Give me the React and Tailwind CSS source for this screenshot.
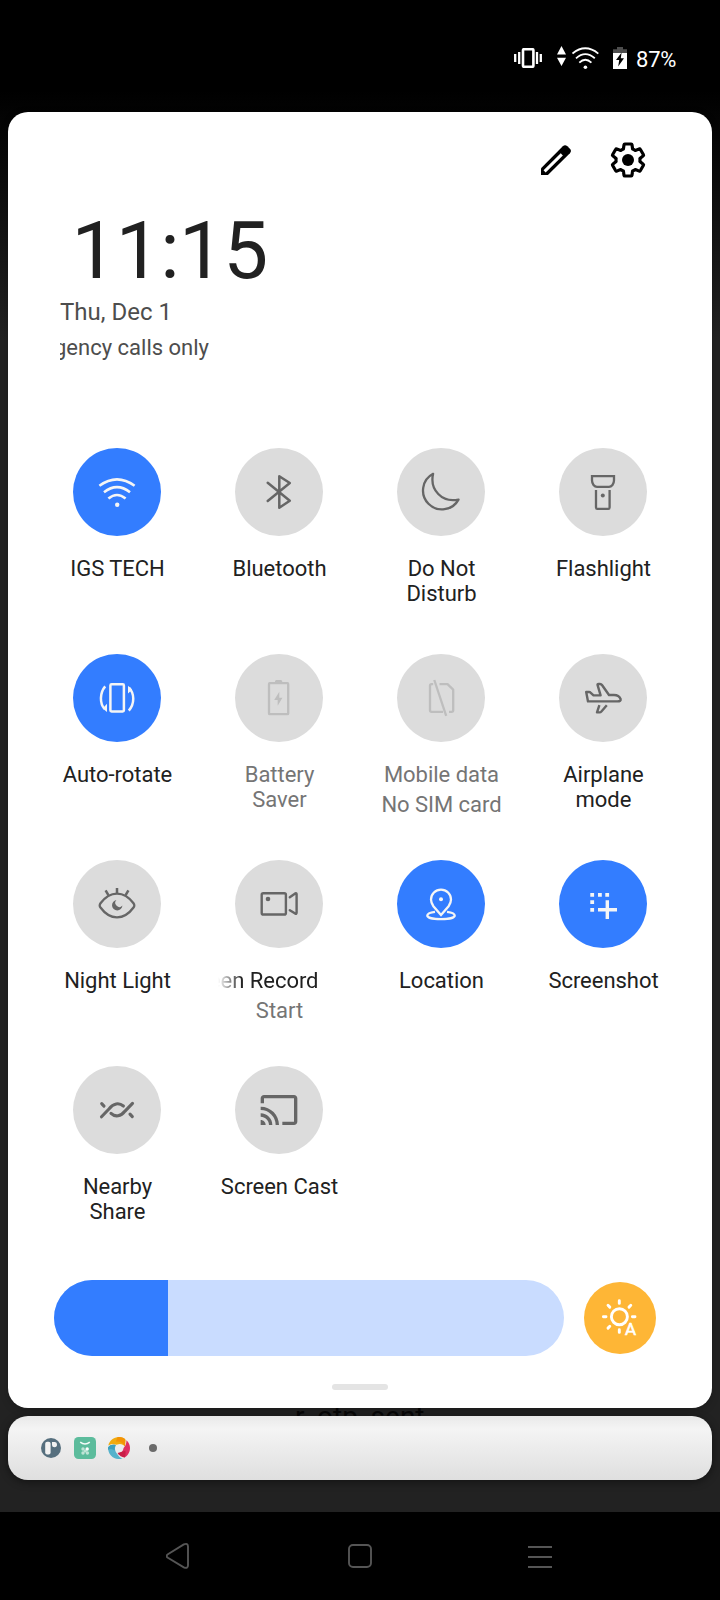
import React from 'react';
import { MdCast } from 'react-icons/md';

const Glyph = ({ children, w = 2.4 }) => (
  <svg
    viewBox="-24 -24 48 48"
    className="h-12 w-12"
    fill="none"
    stroke="currentColor"
    strokeWidth={w}
    strokeLinecap="round"
    strokeLinejoin="round"
  >
    {children}
  </svg>
);

const Dot = ({ x, y, r }) => <circle cx={x} cy={y} r={r} fill="currentColor" stroke="none" />;

const icons = {
  wifi: (
    <Glyph w={2.6}>
      <g strokeLinecap="butt">
        <path d="M-17.6-6.2Q0-19 17.6-6.2" />
        <path d="M-13 .2Q0-10 13 .2" />
        <path d="M-8.6 6.6Q0-.6 8.6 6.6" />
      </g>
      <Dot x={0.2} y={12.7} r={2.2} />
    </Glyph>
  ),
  bluetooth: (
    <Glyph w={2.5}>
      <path d="M-11.3-9.2L10.8 8.7L.3 15.7V-15.7L10.8-9L-11.3 9" />
    </Glyph>
  ),
  moon: (
    <Glyph w={2.3}>
      <path d="M-7.4-18.2A18.9 18.9 0 1 0 18 7.6C1.5 11-11-2-7.4-18.2Z" transform="translate(-.5 0)" />
    </Glyph>
  ),
  flashlight: (
    <Glyph w={2.3}>
      <path d="M-11-15.8H11V-11.8C11-8 8.6-5.2 6-5.2H-6C-8.6-5.2-11-8-11-11.8Z" strokeLinejoin="miter" />
      <path d="M-7-2V15.6Q-7 16.8-5.8 16.8H5.4Q6.6 16.8 6.6 15.6V-2" strokeLinecap="butt" />
      <Dot x={-0.2} y={3.4} r={2} />
    </Glyph>
  ),
  rotate: (
    <Glyph w={2.5}>
      <rect x="-6.6" y="-13.7" width="13.5" height="27.2" rx="1.2" />
      <path d="M-11.8-11.6C-17.4-5-17.4 5.5-12.4 11" strokeLinecap="butt" />
      <path d="M12-10.5C17.6-4.5 17.8 6 11.8 12.6" strokeLinecap="butt" />
      <path d="M-10 5.8V14L-14.3 10.5Z M11-12.2V-4.5L15-8.2Z" fill="currentColor" stroke="none" />
    </Glyph>
  ),
  battery: (
    <Glyph w={2.3}>
      <rect x="-10" y="-14.8" width="19.2" height="31" rx=".8" />
      <path d="M-4-15V-17L-3-18H2.2L3.2-17V-15Z" fill="currentColor" stroke="none" />
      <path d="M.3-6.3L-4.8 2H-1.3V7.8L3.4-.3H.3Z" fill="currentColor" stroke="none" />
    </Glyph>
  ),
  sim: (
    <Glyph w={2.3}>
      <g strokeLinecap="butt">
        <path d="M-6.7-18L5.2 17.8" />
        <path d="M-7.8-13.8H-9.4Q-11-13.8-11-12.2V12.2Q-11 13.8-9.4 13.8H2" />
        <path d="M-1.5-13.8H6.5L12.2-8.4V12.2Q12.2 13.8 10.6 13.8H8" />
      </g>
    </Glyph>
  ),
  airplane: (
    <Glyph w={2.4}>
      <path d="M-16.8-6L-15 3.4H14.5Q18.2 3.4 17.6 1Q16-3 11-3H6L-1-13Q-1.7-14-3-14H-4.5Q-5.8-14-5.4-12.8L-2.4-2.6H-9.5L-12.5-5.4Q-13-6-14-6Z" />
      <path d="M-3.6 7.2L-6 14.4H-3.4Q-2.4 14.4-1.6 13.5L3.8 7.2" strokeLinecap="butt" />
    </Glyph>
  ),
  eye: (
    <Glyph w={2.3}>
      <path d="M-17.3 1.4Q-17.3.4-16.5-.7C-7-13.6 7-13.6 16.5-.7Q17.3.4 17.3 1.4Q17.3 2.4 16.5 3.5C7 16.6-7 16.6-16.5 3.5Q-17.3 2.4-17.3 1.4Z" />
      <g strokeLinecap="butt" strokeWidth="2.5">
        <path d="M0-16V-10.5M-11.4-13.6L-8.6-8.8M11.4-13.6L8.6-8.8" />
      </g>
      <path d="M-.6-3.9A5.2 5.2 0 1 0 5.4 1.6A3.9 3.9 0 0 1-.6-3.9Z" fill="currentColor" stroke="none" />
    </Glyph>
  ),
  camera: (
    <Glyph w={2.4}>
      <rect x="-17.3" y="-10.8" width="24.2" height="21.3" rx="1.6" />
      <Dot x={-11} y={-5} r={2.3} />
      <path d="M10.8-6.8L16.2-10.6Q17.6-11 17.6-9.8V8.6Q17.6 10.2 16.2 9.6L10.8 6.2" />
    </Glyph>
  ),
  location: (
    <Glyph w={2.3}>
      <path d="M0 11L-7.6 2.2Q-10-1-10-4.4A10 10 0 0 1 10-4.4Q10-1 7.6 2.2Z" strokeLinejoin="miter" />
      <Dot x={0} y={-4.7} r={2} />
      <path
        d="M-6 7.8C-10.8 8.4-13.7 9.8-13.7 11.5C-13.7 13.7-7.6 15.2 0 15.2S13.7 13.7 13.7 11.5C13.7 9.8 10.8 8.4 6 7.8"
        strokeLinecap="butt"
      />
    </Glyph>
  ),
  screenshot: (
    <Glyph>
      <path
        d="M-12.7-11h3.8v3.8h-3.8ZM-5-11h3.8v3.8H-5ZM2.3-11h3.8v3.8H2.3ZM-12.7-3.7h3.8V.1h-3.8ZM-12.7 4h3.8v3.7h-3.8ZM-5 4.1H2.6V-3.8H6V4.1H14V7.5H6V15H2.6V7.5H-5Z"
        fill="currentColor"
        stroke="none"
      />
    </Glyph>
  ),
  nearby: (
    <Glyph w={3.1}>
      <path d="M-15.5 6.8L-7.8-1.2C-3.6-6.8 2-7.6 6.4-4" />
      <path d="M-6 3.4C-1.6 7.6 4 6.2 7.8 1.3L15.5-6.6" />
      <path d="M-15.3-6.4L-13-3.9M13 4.1L15.3 6.6" />
    </Glyph>
  ),
  cast: <MdCast className="h-[40px] w-[40px]" />,
};

const tiles = [
  { icon: 'wifi', lines: ['IGS TECH'], on: true },
  { icon: 'bluetooth', lines: ['Bluetooth'] },
  { icon: 'moon', lines: ['Do Not', 'Disturb'] },
  { icon: 'flashlight', lines: ['Flashlight'] },
  { icon: 'rotate', lines: ['Auto-rotate'], on: true },
  { icon: 'battery', lines: ['Battery', 'Saver'], disabled: true },
  { icon: 'sim', lines: ['Mobile data'], sub: 'No SIM card', disabled: true },
  { icon: 'airplane', lines: ['Airplane', 'mode'] },
  { icon: 'eye', lines: ['Night Light'] },
  { icon: 'camera', lines: ['Screen Record'], sub: 'Start', marquee: true },
  { icon: 'location', lines: ['Location'], on: true },
  { icon: 'screenshot', lines: ['Screenshot'], on: true },
  { icon: 'nearby', lines: ['Nearby', 'Share'] },
  { icon: 'cast', lines: ['Screen Cast'] },
];

function Tile({ icon, lines, sub, on, disabled, marquee }) {
  const circle = on
    ? 'bg-[#337dff] text-[#f5f5f5]'
    : disabled
      ? 'bg-[#dcdcdc] text-[#bebebe]'
      : 'bg-[#dcdcdc] text-[#666666]';
  return (
    <div className="flex flex-col items-center">
      <div className={`flex h-[88px] w-[88px] items-center justify-center rounded-full ${circle}`}>{icons[icon]}</div>
      <div
        className={`mt-5 whitespace-nowrap pl-px text-center text-[22px] leading-[25px] tracking-[-0.03px] ${disabled ? 'text-[#757575]' : 'text-[#212121]'}`}
      >
        {marquee ? (
          <div className="flex w-[124px] justify-end overflow-hidden pr-[23px] [mask-image:linear-gradient(to_right,transparent,black_24px)]">
            {lines[0]}
          </div>
        ) : (
          lines.map((l) => <div key={l}>{l}</div>)
        )}
        {sub && <div className="mt-[5px] text-[#757575]">{sub}</div>}
      </div>
    </div>
  );
}

function StatusBar() {
  return (
    <div className="flex h-[112px] items-start pl-[514px] pt-[46px] text-white">
      <svg className="mt-[2px] h-5 w-7" viewBox="0 0 28 20" fill="none" stroke="currentColor">
        <rect x="9" y="1.2" width="10.4" height="17.6" rx="1" strokeWidth="2.6" />
        <path d="M5.2 4V16M23 4V16M1.2 6V14M26.8 6V14" strokeWidth="2.3" />
      </svg>
      <svg className="ml-[15px] h-5 w-[9px]" viewBox="0 0 9 20" fill="currentColor">
        <path d="M4.5 0L9 8.4H0ZM4.5 20L0 11.8H9Z" />
      </svg>
      <svg className="ml-[6px] mt-px h-[23px] w-[27px]" viewBox="0 0 27 23" fill="none" stroke="currentColor" strokeWidth="1.8">
        <path d="M.5 6.6Q13.3-4 26.3 6.6M4 11.3Q13.3 3 22.8 11.3M7.3 15.6Q13.3 10 19.4 15.6" />
        <circle cx="13.4" cy="20.2" r="1.8" fill="currentColor" stroke="none" />
      </svg>
      <svg className="ml-[14px] mt-px h-[22px] w-[14px]" viewBox="0 0 14 22">
        <path d="M4 0H10V2.3H14V6H0V2.3H4Z" fill="#4d4d4d" />
        <path d="M0 6H14V22H0Z" fill="#fff" />
        <path d="M8.6 5.6L3 13H6.2L5.2 19.5L11 11.2H7.8Z" fill="#000" />
      </svg>
      <div className="ml-[9px] mt-px text-[22px] leading-[25px] tracking-[-0.2px]">87%</div>
    </div>
  );
}

function Header() {
  return (
    <div>
      <div className="flex h-[96px] items-start pl-[533px] pt-[31px] text-black">
        <svg className="mt-[2px] h-[30px] w-[30px]" viewBox="0 0 30 30">
          <path d="M0 23.3V30H6.9L28.9 8.2Q31 6 28.9 3.8L26.4 1.2Q24-.8 21.8 1.2Z" fill="#000" />
          <path d="M3.6 26.4L20.8 9.4" stroke="#fff" strokeWidth="3" />
        </svg>
        <svg className="-mt-[3px] ml-[37px] h-[40px] w-[40px]" viewBox="0 0 24 24" fill="none">
          <path
            d="M19.14 12.94c.04-.3.06-.61.06-.94 0-.32-.02-.64-.07-.94l2.03-1.58c.18-.14.23-.41.12-.61l-1.92-3.32c-.12-.22-.37-.29-.59-.22l-2.39.96c-.5-.38-1.03-.7-1.62-.94l-.36-2.54c-.04-.24-.24-.41-.48-.41h-3.84c-.24 0-.43.17-.47.41l-.36 2.54c-.59.24-1.13.57-1.62.94l-2.39-.96c-.22-.08-.47 0-.59.22L2.74 8.87c-.12.21-.08.47.12.61l2.03 1.58c-.05.3-.09.63-.09.94s.02.64.07.94l-2.03 1.58c-.18.14-.23.41-.12.61l1.92 3.32c.12.22.37.29.59.22l2.39-.96c.5.38 1.03.7 1.62.94l.36 2.54c.05.24.24.41.48.41h3.84c.24 0 .44-.17.47-.41l.36-2.54c.59-.24 1.13-.56 1.62-.94l2.39.96c.22.08.47 0 .59-.22l1.92-3.32c.12-.22.07-.47-.12-.61l-2.01-1.58z"
            stroke="#000"
            strokeWidth="1.9"
            strokeLinejoin="round"
          />
          <circle cx="12" cy="12" r="3.6" fill="#000" />
        </svg>
      </div>
      <div className="pl-[63.5px] text-[80px] leading-[86px] tracking-[-0.6px] text-[#212121]">11:15</div>
      <div className="ml-[52px] mt-1 text-[24px] leading-[28px] text-[#4d4d4d]">Thu, Dec 1</div>
      <div className="ml-[52px] mt-[9px] flex w-[149px] justify-end overflow-hidden whitespace-nowrap text-[22px] leading-[25px] text-[#4d4d4d]">
        Emergency calls only
      </div>
    </div>
  );
}

function Brightness() {
  return (
    <div className="flex items-center pl-[46px]">
      <div className="h-[76px] w-[510px] overflow-hidden rounded-full bg-[#c9dcff]">
        <div className="h-full w-[114px] bg-[#337dff]" />
      </div>
      <div className="ml-5 flex h-[72px] w-[72px] items-center justify-center rounded-full bg-[#feb636]">
        <svg className="h-12 w-12" viewBox="-24 -24 48 48" fill="none" stroke="#fff" strokeWidth="2.9" strokeLinecap="round">
          <circle cx="-.6" cy="-1.3" r="8" />
          <path d="M-.7-17.2V-14.6M-.7 11.8V14.4M-16.6-1.3H-14M12.4-1.3H15M-12-12.7L-10.2-10.9M10.8-12.7L9-10.9M-12 10.1L-10.2 8.3" />
          <text x="5" y="16.6" fill="#fff" stroke="#fff" strokeWidth=".6" className="font-['Roboto'] text-[17px] font-normal">
            A
          </text>
        </svg>
      </div>
    </div>
  );
}

function NotificationStrip() {
  return (
    <div className="relative mx-2 mt-2 flex h-16 items-center rounded-[20px] bg-linear-to-b from-[#e9e9e9] via-[#f4f4f4] via-20% to-[#dfdfdf] pl-[33px] shadow-[0_2px_8px_rgba(0,0,0,0.45)]">
      <svg className="h-5 w-5" viewBox="0 0 20 20">
        <circle cx="10" cy="10" r="10" fill="#566f7e" />
        <rect x="4.2" y="3.8" width="5.4" height="12.8" rx="2" fill="#f2f2f2" />
        <path d="M11 4H14Q16 4.4 16 6.6Q16 9.2 13.6 9.2Q11 9.2 11 7Z" fill="#f2f2f2" />
      </svg>
      <svg className="ml-[13px] h-[22px] w-[22px]" viewBox="0 0 22 22">
        <rect width="22" height="22" rx="4.5" fill="#5cbc9c" />
        <path d="M6.2 5.2Q11 9 15.8 5.2" fill="none" stroke="#f4fbf8" strokeWidth="1.5" />
        <g fill="#bfe4d6">
          <circle cx="9" cy="12" r="1.7" />
          <circle cx="9" cy="16" r="1.7" />
          <circle cx="13.4" cy="16" r="1.7" />
          <circle cx="11.2" cy="14" r="1.6" />
        </g>
        <circle cx="13.2" cy="12" r="1.7" fill="#fff" />
      </svg>
      <svg className="ml-3 h-[22px] w-[22px]" viewBox="0 0 22 22">
        <path d="M.3 8.6C1.4 3.6 5.5 0 11 0C14 0 16.5 1 17.4 2.8L17 9.6C15 7 12 6.4 8.6 7.8C5 6.8 2.5 7.2.3 8.6Z" fill="#f0ab10" />
        <path d="M9.4 .2C12.5-.4 16 .6 17.4 2.8L17 9.6C15 5.6 12 4.2 8 4.6Z" fill="#f39305" />
        <path d="M18.4 3.2C21 5.4 22 8.4 22 11C22 15.5 19.5 19 16.6 20.4L9.6 16.8C13.5 16 15.2 13.8 15.6 11C17.8 8.6 18.6 6 18.4 3.2Z" fill="#de2f62" />
        <path d="M9.6 16L17.4 13.8C17.8 17 17.4 19 16.6 20.4C14 20.4 11.2 18.6 9.6 16Z" fill="#c91f48" />
        <path d="M0 10.4C2 7.8 4.6 7.4 7.8 8.2C6 11.6 7.4 14.6 9.2 17C10.6 19.4 12.4 20.8 14.6 21.6C7 23.6 0 18.6 0 10.4Z" fill="#55b2cb" />
        <path d="M0 10.4C2 7.8 4.6 7.4 7.8 8.2C6.6 9.8 6.4 11.6 6.8 13.4C4.4 11.6 2 11.4 0 12.8Z" fill="#3d9fbd" />
      </svg>
      <div className="ml-[19px] h-2 w-2 rounded-full bg-[#6b6b6b]" />
    </div>
  );
}

function NavBar() {
  return (
    <div className="flex h-[88px] items-start bg-black pl-[166px] pt-[30px] text-[#555555]">
      <svg className="h-7 w-6" viewBox="0 0 24 28" fill="none" stroke="currentColor" strokeWidth="1.9">
        <path d="M1.9 12.2L17.8 2.4Q22 .6 22 4.6V23.2Q22 27 17.8 25.4L1.9 15.8Q-.6 14 1.9 12.2Z" />
      </svg>
      <svg className="ml-[158px] mt-[2px] h-6 w-6" viewBox="0 0 24 24" fill="none" stroke="currentColor" strokeWidth="1.9">
        <rect x="1" y="1" width="22" height="22" rx="4" />
      </svg>
      <svg className="ml-[156px] mt-[4px] h-6 w-6" viewBox="0 0 24 24" stroke="currentColor" strokeWidth="2">
        <path d="M0 1H24M0 11H24M0 21H24" />
      </svg>
    </div>
  );
}

export default function App() {
  return (
    <div className="relative flex h-[1600px] w-[720px] flex-col overflow-hidden bg-[linear-gradient(to_bottom,#000_90px,#222_340px)] font-['Roboto',sans-serif]">
      <div className="absolute left-[295px] top-[1401px] text-[28px] leading-[32px] text-[#080808]">r_otp_sent</div>
      <StatusBar />
      <div className="relative mx-2 flex h-[1296px] flex-col rounded-[20px] bg-white shadow-[0_2px_8px_rgba(0,0,0,0.2)]">
        <Header />
        <div className="mt-[88px] grid auto-rows-[206px] grid-cols-4 px-7">
          {tiles.map((t) => (
            <Tile key={t.icon} {...t} />
          ))}
        </div>
        <div className="mt-auto pb-[18px]">
          <Brightness />
          <div className="mx-auto mt-7 h-[6px] w-14 rounded-full bg-[#e4e4e4]" />
        </div>
      </div>
      <NotificationStrip />
      <div className="mt-auto">
        <NavBar />
      </div>
    </div>
  );
}
